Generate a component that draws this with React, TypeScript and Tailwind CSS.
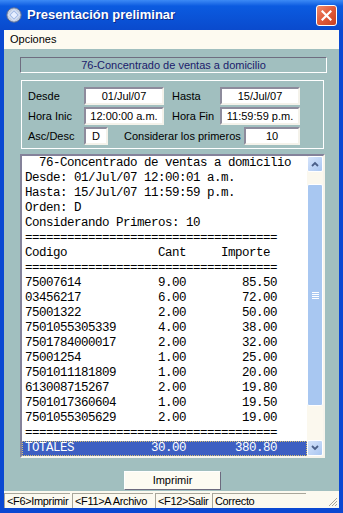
import type { FC, ReactNode } from "react";

const rows: [string, string, string][] = [
  ["75007614", "9.00", "85.50"],
  ["03456217", "6.00", "72.00"],
  ["75001322", "2.00", "50.00"],
  ["7501055305339", "4.00", "38.00"],
  ["7501784000017", "2.00", "32.00"],
  ["75001254", "1.00", "25.00"],
  ["7501011181809", "1.00", "20.00"],
  ["613008715267", "2.00", "19.80"],
  ["7501017360604", "1.00", "19.50"],
  ["7501055305629", "2.00", "19.00"],
];

const fmt = (a: string, b: string, c: string) => a.padEnd(18) + b.padStart(5) + c.padStart(13);
const eq = "=".repeat(36);

const lines = [
  "  76-Concentrado de ventas a domicilio",
  "Desde: 01/Jul/07 12:00:01 a.m.",
  "Hasta: 15/Jul/07 11:59:59 p.m.",
  "Orden: D",
  "Considerando Primeros: 10",
  eq,
  "Codigo".padEnd(19) + "Cant" + "Importe".padStart(12),
  eq,
  ...rows.map(r => fmt(...r)),
  eq,
];

const Field: FC<{ w: string; children: ReactNode }> = ({ w, children }) => (
  <div
    className={`${w} h-[18px] bg-white border-2 border-t-[#8d8b9c] border-l-[#8d8b9c] border-b-[#f4f2ea] border-r-[#f4f2ea] flex items-center justify-center leading-none`}
  >
    {children}
  </div>
);

const Chevron: FC<{ up?: boolean }> = ({ up }) => (
  <div className="h-[16px] rounded-[2px] border border-white bg-linear-to-br from-[#d6e4fb] to-[#a9c6f1] flex items-center justify-center">
    <svg width="8" height="6" viewBox="0 0 8 6">
      <path d={up ? "M1 5 L4 2 L7 5" : "M1 1 L4 4 L7 1"} fill="none" stroke="#4a5f88" strokeWidth="1.8" />
    </svg>
  </div>
);

export default function App() {
  return (
    <div className="w-[343px] h-[513px] flex flex-col bg-[#0a48d2] overflow-hidden font-['Liberation_Sans',Arial,sans-serif] text-[11px] text-black">
      {/* title bar */}
      <div className="h-[30px] shrink-0 flex items-center pl-[6px] pr-[6px] bg-linear-to-b from-[#3c8af5] from-0% via-[#0b5be0] via-20% to-[#0a4acd] to-100%">
        <svg width="16" height="16" viewBox="0 0 16 16">
          <circle cx="8" cy="8" r="7.2" fill="#c3cfe3" stroke="#5d6f95" strokeWidth="1" />
          <path d="M8 2.5 L13.5 8 L8 13.5 L2.5 8 Z" fill="#9fb8e4" stroke="#eef3ff" strokeWidth="1" />
          <path d="M8 4.5 L11.5 8 L8 11.5 L4.5 8 Z" fill="#e6eeff" />
        </svg>
        <span className="ml-[5px] text-white font-bold text-[13px] [text-shadow:1px_1px_0_#0b2a8c]">
          Presentación preliminar
        </span>
        <div className="ml-auto w-[21px] h-[21px] rounded-[3px] border border-white bg-linear-to-br from-[#f08a6a] via-[#e05a3a] to-[#c8401f] flex items-center justify-center">
          <svg width="11" height="11" viewBox="0 0 11 11">
            <path d="M1.5 1.5 L9.5 9.5 M9.5 1.5 L1.5 9.5" stroke="white" strokeWidth="2.2" strokeLinecap="square" />
          </svg>
        </div>
      </div>

      <div className="flex-1 flex flex-col mx-[4px] mb-[5px] bg-[#a1bfbf]">
        {/* menu */}
        <div className="h-[19px] shrink-0 bg-[#fdfaf0] flex items-center pl-[6px]">Opciones</div>

        <div className="flex-1 flex flex-col pl-[16px] pr-[14px] pt-[8px]">
          <div className="w-[307px] h-[16px] border border-t-[#6f6d80] border-l-[#6f6d80] border-b-white border-r-white flex items-center justify-center text-[#1b1b6b]">
            76-Concentrado de ventas a domicilio
          </div>

          <div className="mt-[7px] ml-[1px] w-[303px] h-[69px] border border-white flex flex-col gap-[2px] pt-[6px] pl-[6px]">
            <div className="flex items-center">
              <span className="w-[56px]">Desde</span>
              <Field w="w-[80px]">01/Jul/07</Field>
              <span className="ml-[8px] w-[48px]">Hasta</span>
              <Field w="w-[80px]">15/Jul/07</Field>
            </div>
            <div className="flex items-center">
              <span className="w-[56px]">Hora Inic</span>
              <Field w="w-[80px]">12:00:00 a.m.</Field>
              <span className="ml-[8px] w-[48px]">Hora Fin</span>
              <Field w="w-[80px]">11:59:59 p.m.</Field>
            </div>
            <div className="flex items-center">
              <span className="w-[56px]">Asc/Desc</span>
              <Field w="w-[24px]">D</Field>
              <span className="ml-[16px] w-[120px]">Considerar los primeros</span>
              <Field w="w-[56px]">10</Field>
            </div>
          </div>

          {/* report list */}
          <div className="mt-[5px] w-[305px] h-[304px] border-2 border-t-[#84829a] border-l-[#84829a] border-b-[#f6f4ec] border-r-[#f6f4ec] bg-white flex">
            <div className="flex-1 flex flex-col font-['Liberation_Mono','Courier_New',monospace] text-[12.5px] tracking-[-0.5px] leading-[15px] whitespace-pre">
              {lines.map((l, i) => (
                <div key={i} className="h-[15px] pl-[3px]">{l}</div>
              ))}
              <div className="h-[15px] pl-[3px] bg-[#3d5fc2] text-white outline-1 outline-dotted outline-[#d8c070] -outline-offset-1">
                {fmt("TOTALES", "30.00", "380.80")}
              </div>
            </div>
            <div className="w-[16px] flex flex-col bg-[#fbf8ee]">
              <Chevron up />
              <div className="h-[12px]" />
              <div className="h-[222px] rounded-[2px] border border-white bg-[#a8c7f1] flex flex-col items-center justify-center gap-[1px]">
                <div className="w-[7px] h-px bg-white" />
                <div className="w-[7px] h-px bg-white" />
                <div className="w-[7px] h-px bg-white" />
                <div className="w-[7px] h-px bg-white" />
              </div>
              <div className="flex-1" />
              <Chevron />
            </div>
          </div>

          <div className="mt-[13px] self-center w-[97px] h-[19px] bg-[#fdfbf2] border border-t-white border-l-white border-b-[#6c6a7e] border-r-[#6c6a7e] flex items-center justify-center">
            Imprimir
          </div>
        </div>

        {/* status bar */}
        <div className="h-[17px] shrink-0 bg-[#fbf9ef] flex items-stretch gap-[2px] pt-[2px] relative tracking-[-0.35px] whitespace-nowrap">
          <div className="w-[66px] overflow-hidden border-t border-l border-[#a8a69a] pl-[2px] flex items-center">&lt;F6&gt;Imprimir</div>
          <div className="w-[81px] overflow-hidden border-t border-l border-[#a8a69a] pl-[2px] flex items-center">&lt;F11&gt;A Archivo</div>
          <div className="w-[55px] overflow-hidden border-t border-l border-[#a8a69a] pl-[2px] flex items-center">&lt;F12&gt;Salir</div>
          <div className="w-[94px] overflow-hidden border-t border-l border-[#a8a69a] pl-[2px] flex items-center">Correcto</div>
          <svg className="absolute right-[1px] bottom-[1px]" width="12" height="12" viewBox="0 0 12 12">
            <path d="M11 3 L3 11 M11 6 L6 11 M11 9 L9 11" stroke="#a8a69a" strokeWidth="1" />
          </svg>
        </div>
      </div>
    </div>
  );
}
